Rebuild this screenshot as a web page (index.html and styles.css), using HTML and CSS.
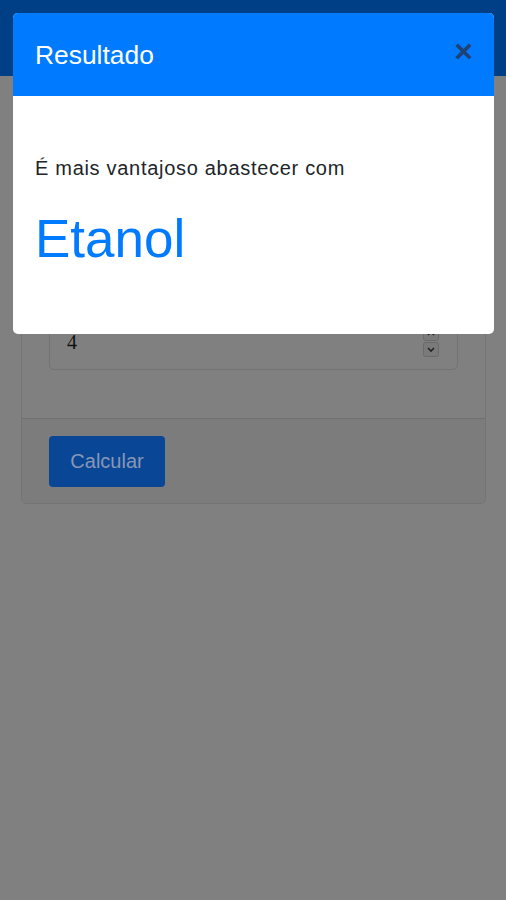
FILE: index.html
```html
<!DOCTYPE html>
<html lang="pt-BR">
<head>
<meta charset="utf-8">
<title>Álcool ou Gasolina</title>
<link rel="stylesheet" href="styles.css">
</head>
<body>
<nav class="navbar"></nav>
<main class="container">
  <section class="card">
    <div class="card-body">
      <div class="card-title"></div>
      <div class="form-group">
        <div class="label"></div>
        <div class="input"></div>
      </div>
      <div class="form-group">
        <div class="label"></div>
        <div class="input">
          <span class="value">4</span>
          <span class="spinner">
            <svg width="16" height="30" viewBox="0 0 16 30">
              <rect x="0.5" y="0.5" width="15" height="13" rx="2" fill="#7a7a7a" stroke="#6a6a6a"/>
              <rect x="0.5" y="15.5" width="15" height="14" rx="2" fill="#7a7a7a" stroke="#6a6a6a"/>
              <path d="M5 8 L8 5 L11 8" fill="none" stroke="#222" stroke-width="1.6"/>
              <path d="M5 21 L8 24 L11 21" fill="none" stroke="#222" stroke-width="1.6"/>
            </svg>
          </span>
        </div>
      </div>
    </div>
    <div class="card-footer">
      <button class="btn">Calcular</button>
    </div>
  </section>
</main>

<div class="modal">
  <div class="modal-header">
    <h5 class="modal-title">Resultado</h5>
    <span class="close">&times;</span>
  </div>
  <div class="modal-body">
    <p class="lead">É mais vantajoso abastecer com</p>
    <p class="result">Etanol</p>
  </div>
</div>
</body>
</html>
```
FILE: styles.css
```css
* { box-sizing: border-box; }
html, body { margin: 0; padding: 0; }
body {
  background: #808080;
  font-family: "Liberation Sans", Arial, sans-serif;
  height: 900px;
  overflow: hidden;
  position: relative;
}
.navbar {
  height: 76px;
  background: #003f85;
}
.container {
  padding: 20px 20px 0 21px;
}
.card {
  width: 465px;
  border: 1px solid #747474;
  border-radius: 5px;
  background: #808080;
}
.card-body {
  padding: 27px 27px 28px;
}
.card-title {
  margin: 0 0 20px;
  height: 40px;
}
.form-group { margin-bottom: 20px; }
.label {
  height: 24px;
  margin-bottom: 8px;
}
.input {
  height: 51px;
  border: 1px solid #737373;
  border-radius: 5px;
  display: flex;
  align-items: center;
  justify-content: space-between;
  padding: 0 18px 0 17px;
}
.value {
  font-family: "Liberation Serif", "Times New Roman", serif;
  font-size: 20px;
  color: #111;
  margin-top: -4px;
}
.spinner { display: flex; margin-left: auto; margin-top: -6px; }
.card-footer {
  border-top: 1px solid #6f6f6f;
  background: #7c7c7c;
  padding: 17px 27px 16px;
  border-radius: 0 0 5px 5px;
}
.btn {
  width: 116px;
  height: 51px;
  border: 0;
  border-radius: 4px;
  background: #0a4696;
  color: #8797b6;
  font-family: "Liberation Sans", Arial, sans-serif;
  font-size: 20px;
  padding: 0;
  display: block;
}
.modal {
  position: absolute;
  top: 13px;
  left: 13px;
  width: 481px;
  height: 321px;
  background: #fff;
  border-radius: 5px;
  overflow: hidden;
}
.modal-header {
  height: 83px;
  background: #007bff;
  display: flex;
  align-items: center;
  justify-content: space-between;
  padding: 0 22px;
}
.modal-title {
  margin: 0;
  font-size: 26.4px;
  font-weight: 400;
  color: #fff;
  margin-top: 2px;
}
.close {
  font-size: 32px;
  font-weight: 700;
  line-height: 1;
  color: #1f4173;
  margin-top: -8px;
  margin-right: -1px;
}
.modal-body {
  padding: 57px 22px 0;
}
.lead {
  margin: 0;
  font-size: 20px;
  line-height: 30px;
  color: #212529;
  letter-spacing: 0.7px;
}
.result {
  margin: 24px 0 0;
  font-size: 53px;
  line-height: 64px;
  color: #007bff;
}
```
